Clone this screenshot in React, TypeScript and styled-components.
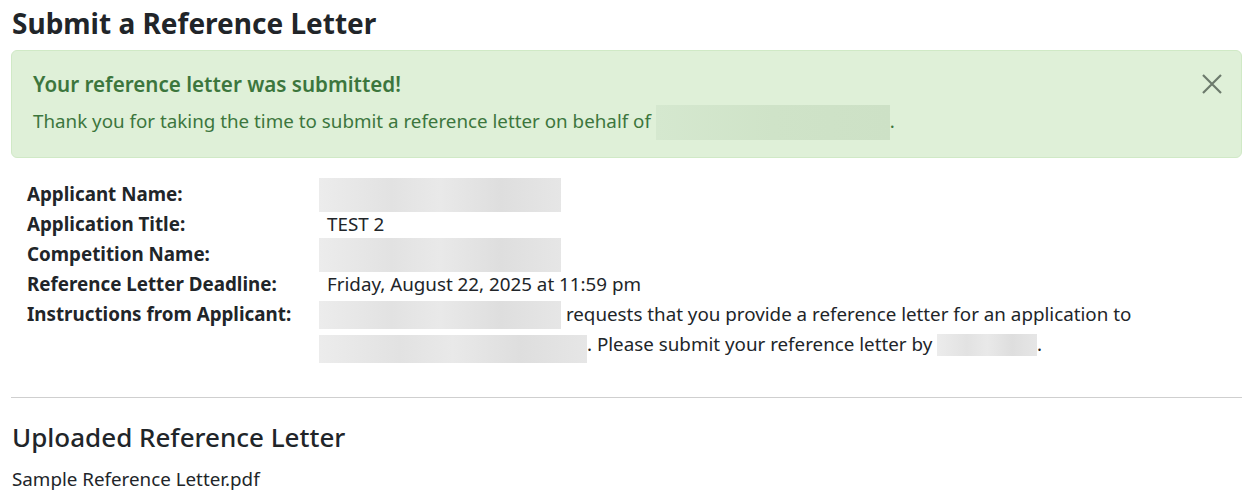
import React from 'react';
import styled, { createGlobalStyle } from 'styled-components';

const GlobalStyle = createGlobalStyle`
  body {
    margin: 0;
    background: #fff;
    color: #212529;
    font-family: "Segoe UI", "Noto Sans", sans-serif;
    font-size: 18.8px;
  }
`;

const info = [
  { label: 'Applicant Name:', blur: 242 },
  { label: 'Application Title:', text: 'TEST 2' },
  { label: 'Competition Name:', blur: 242 },
  { label: 'Reference Letter Deadline:', text: 'Friday, August 22, 2025 at 11:59 pm' },
];

const App = () => {
  return (
    <Page>
      <GlobalStyle />
      <Title>Submit a Reference Letter</Title>
      <Alert>
        <AlertBody>
          <AlertTitle>Your reference letter was submitted!</AlertTitle>
          <AlertText>
            Thank you for taking the time to submit a reference letter on behalf of{' '}
            <Blur $w={234} $h={35} $tone="green" />.
          </AlertText>
        </AlertBody>
        <CloseButton aria-label="Close">
          <svg width="22" height="22" viewBox="0 0 22 22">
            <path d="M2 2L20 20M20 2L2 20" stroke="#6c7a6c" strokeWidth="2.2" />
          </svg>
        </CloseButton>
      </Alert>
      <InfoList>
        {info.map((row, i) => (
          <React.Fragment key={i}>
            <Label>{row.label}</Label>
            <Value>{row.text ? row.text : <Blur $w={row.blur!} $h={34} $shift $dy={-1} />}</Value>
          </React.Fragment>
        ))}
        <Label>Instructions from Applicant:</Label>
        <Value>
          <Blur $w={242} $h={28} $shift $dy={-1} /> requests that you provide a reference letter for an application to{' '}
          <Blur $w={268} $h={28} $shift $dy={3} />. Please submit your reference letter by <Blur $w={100} $h={22} $dy={-1} />.
        </Value>
      </InfoList>
      <Divider />
      <SubTitle>Uploaded Reference Letter</SubTitle>
      <FileName>Sample Reference Letter.pdf</FileName>
    </Page>
  );
};

const Page = styled.div`
  padding: 0 11px;
`;

const Title = styled.h1`
  margin: 0;
  padding: 3px 1px 0;
  font-size: 28px;
  font-weight: 700;
  line-height: 40px;
  height: 47px;
`;

const Alert = styled.div`
  box-sizing: border-box;
  height: 108px;
  padding: 19px 18px 19px 21px;
  display: flex;
  justify-content: space-between;
  align-items: flex-start;
  background: #dff0d8;
  border: 1px solid #d0e9c6;
  border-radius: 6px;
  color: #3c763d;
`;

const AlertBody = styled.div`
  display: flex;
  flex-direction: column;
  gap: 9px;
`;

const AlertTitle = styled.div`
  font-size: 20.6px;
  font-weight: 600;
  line-height: 28px;
`;

const AlertText = styled.div`
  line-height: 28px;
`;

const CloseButton = styled.button`
  margin-top: 3px;
  padding: 0;
  border: 0;
  background: none;
  cursor: pointer;
  display: flex;
`;

// blurred-out personal data; $dy nudges the block down (+) or up (-) without changing the line box
const Blur = styled.span<{ $w: number; $h: number; $tone?: 'green' | 'gray'; $shift?: boolean; $dy?: number }>`
  display: inline-block;
  vertical-align: middle;
  width: ${(p) => p.$w}px;
  height: ${(p) => p.$h}px;
  margin-top: ${(p) => -Math.floor((p.$h - 16) / 2) + (p.$dy ?? 0)}px;
  margin-bottom: ${(p) => -Math.floor((p.$h - 16) / 2) - (p.$dy ?? 0)}px;
  margin-left: ${(p) => (p.$shift ? '-8px' : '0')};
  background: ${(p) =>
    p.$tone === 'green'
      ? 'linear-gradient(90deg, #d5e8cf, #cfe3c8 50%, #cde1c6)'
      : 'linear-gradient(90deg, #ececec, #e2e2e2 30%, #e9e9e9 50%, #dedede 75%, #e6e6e6)'};
`;

const InfoList = styled.div`
  display: grid;
  grid-template-columns: 300px 1fr;
  grid-auto-rows: minmax(30px, auto);
  margin-top: 21px;
  padding: 0 95px 0 16px;
  line-height: 30px;
`;

const Label = styled.div`
  font-weight: 700;
`;

const Value = styled.div``;

const Divider = styled.hr`
  margin: 38px 0 0;
  border: 0;
  border-top: 1px solid #cfcfcf;
`;

const SubTitle = styled.h2`
  margin: 22px 1px 0;
  font-size: 26px;
  font-weight: 500;
  line-height: 34px;
`;

const FileName = styled.div`
  margin: 11px 1px 0;
  line-height: 28px;
`;

export default App;
